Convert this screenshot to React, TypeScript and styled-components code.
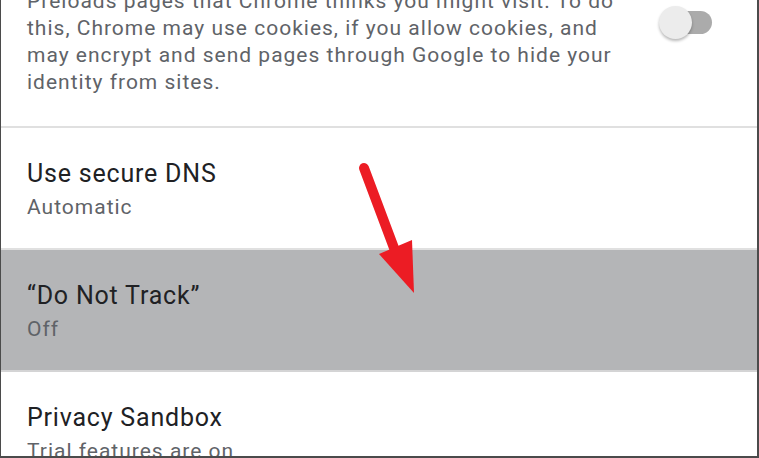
import styled, { createGlobalStyle } from 'styled-components';

const GlobalStyle = createGlobalStyle`
  body {
    margin: 0;
    background: #ffffff;
    font-family: Roboto, "Liberation Sans", sans-serif;
  }
`;

const Frame = styled.div`
  position: relative;
  width: 759px;
  height: 458px;
  box-sizing: border-box;
  border-left: 1px solid #4b4b4b;
  border-right: 2px solid #4b4b4b;
  border-bottom: 2px solid #4b4b4b;
  background: #ffffff;
  overflow: hidden;
`;

/* list is scrolled a little, so the first row is cut at the top */
const List = styled.div`
  display: flex;
  flex-direction: column;
  margin-top: -12px;
`;

const ToggleRow = styled.div`
  display: flex;
  align-items: flex-start;
  padding: 0 45px 30px 26px;
  border-bottom: 2px solid #e0e0e0;
`;

const Description = styled.div`
  flex: 1;
  font-size: 21px;
  line-height: 27px;
  letter-spacing: 1px;
  color: #5f6368;
  white-space: pre-line;
`;

const Toggle = styled.div`
  position: relative;
  flex: none;
  display: flex;
  justify-content: flex-end;
  width: 53px;
  height: 33px;
  margin-top: 18px;
`;

const Track = styled.div`
  width: 48px;
  height: 23px;
  margin-top: 5px;
  border-radius: 12px;
  background: #ababab;
`;

const Thumb = styled.div`
  position: absolute;
  left: 0;
  top: 0;
  width: 33px;
  height: 33px;
  border-radius: 50%;
  background: #ececec;
  box-shadow: 0 2px 3px rgba(0, 0, 0, 0.28);
`;

const SettingRow = styled.div<{ $highlight?: boolean }>`
  box-sizing: border-box;
  height: 122px;
  padding: 31px 26px 0;
  background: ${(p) => (p.$highlight ? '#b4b5b7' : '#ffffff')};
  border-bottom: 2px solid ${(p) => (p.$highlight ? '#d4d4d5' : '#e0e0e0')};
`;

const Title = styled.div`
  font-size: 25px;
  line-height: 30px;
  letter-spacing: 0.8px;
  color: #202124;
`;

const Subtitle = styled.div`
  margin-top: 2px;
  font-size: 21px;
  line-height: 32px;
  letter-spacing: 1px;
  color: #5f6368;
`;

const Arrow = styled.svg`
  position: absolute;
  left: 340px;
  top: 150px;
  width: 90px;
  height: 160px;
`;

const settings = [
  { title: 'Use secure DNS', value: 'Automatic' },
  { title: '\u201CDo Not Track\u201D', value: 'Off', highlight: true },
  { title: 'Privacy Sandbox', value: 'Trial features are on' },
];

export default function App() {
  return (
    <>
      <GlobalStyle />
      <Frame>
        <List>
          <ToggleRow>
            <Description>
              {'Preloads pages that Chrome thinks you might visit. To do\nthis, Chrome may use cookies, if you allow cookies, and\nmay encrypt and send pages through Google to hide your\nidentity from sites.'}
            </Description>
            <Toggle>
              <Track />
              <Thumb />
            </Toggle>
          </ToggleRow>
          {settings.map((s) => (
            <SettingRow key={s.title} $highlight={s.highlight}>
              <Title>{s.title}</Title>
              <Subtitle>{s.value}</Subtitle>
            </SettingRow>
          ))}
        </List>
        <Arrow viewBox="0 0 90 160">
          <line x1="23" y1="18" x2="53" y2="98" stroke="#ec1c24" strokeWidth="10" strokeLinecap="round" />
          <polygon points="38,104 71,90 73,143" fill="#ec1c24" />
        </Arrow>
      </Frame>
    </>
  );
}
